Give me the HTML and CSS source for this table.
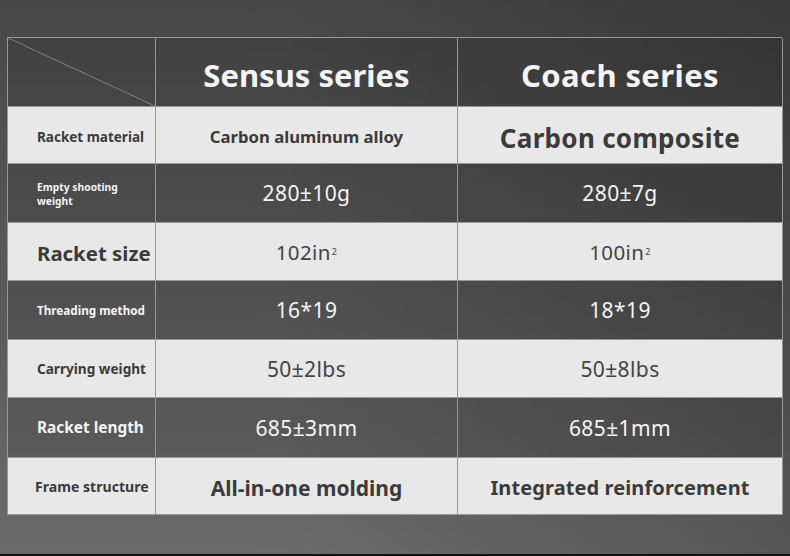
FILE: index.html
```html
<!DOCTYPE html>
<html>
<head>
<meta charset="utf-8">
<link rel="stylesheet" href="styles.css">
</head>
<body>
<div class="page">
  <div class="table">
    <div class="cell dark corner"></div>
    <div class="cell dark head">Sensus series</div>
    <div class="cell dark head h-coach">Coach series</div>

    <div class="cell light label l-material">Racket material</div>
    <div class="cell light val v-material">Carbon aluminum alloy</div>
    <div class="cell light val v-composite">Carbon composite</div>

    <div class="cell dark label l-empty">Empty shooting<br>weight</div>
    <div class="cell dark val num">280±10g</div>
    <div class="cell dark val num">280±7g</div>

    <div class="cell light label l-size">Racket size</div>
    <div class="cell light val num n-size">102in<sup class="sq">2</sup></div>
    <div class="cell light val num n-size">100in<sup class="sq">2</sup></div>

    <div class="cell dark label l-thread">Threading method</div>
    <div class="cell dark val num">16*19</div>
    <div class="cell dark val num">18*19</div>

    <div class="cell light label l-carry">Carrying weight</div>
    <div class="cell light val num">50±2lbs</div>
    <div class="cell light val num">50±8lbs</div>

    <div class="cell dark label l-length">Racket length</div>
    <div class="cell dark val num">685±3mm</div>
    <div class="cell dark val num">685±1mm</div>

    <div class="cell light label l-frame">Frame structure</div>
    <div class="cell light val v-frame">All-in-one molding</div>
    <div class="cell light val v-integrated">Integrated reinforcement</div>
  </div>
</div>
</body>
</html>
```
FILE: styles.css
```css
html, body {
  margin: 0;
  padding: 0;
}
body {
  width: 790px;
  height: 556px;
  overflow: hidden;
  font-family: "Noto Sans", "Open Sans", sans-serif;
}
.page {
  box-sizing: border-box;
  height: 556px;
  padding: 37px 0 0 7px;
  border-bottom: 2px solid #101010;
  background:
    linear-gradient(to left, rgba(0,0,0,0.2), rgba(0,0,0,0) 65%),
    linear-gradient(to bottom, #474747, #6b6b6b);
}
.table {
  display: grid;
  width: 775px;
  grid-template-columns: 148px 302px 325px;
  grid-template-rows: 69px 57px 59px 58px 59px 58px 60px 57px;
  border-left: 1px solid #979797;
  border-top: 1px solid #979797;
  box-sizing: border-box;
}
.cell {
  box-sizing: border-box;
  border-right: 1px solid #979797;
  border-bottom: 1px solid #979797;
  display: flex;
  align-items: center;
  justify-content: center;
  text-align: center;
}
.dark {
  background: rgba(0,0,0,0.1);
  color: #f4f4f4;
}
.light {
  background: #e8e8e8;
  color: #3b3b3b;
}
.corner {
  background:
    linear-gradient(to top right, transparent calc(50% - 0.7px), #8c8c8c 50%, transparent calc(50% + 0.7px)),
    rgba(0,0,0,0.1);
}
.head {
  font-size: 31px;
  font-weight: 700;
  padding-top: 6px;
}
.h-coach { letter-spacing: 0.4px; }
.label {
  justify-content: flex-start;
  text-align: left;
  padding-left: 29px;
  font-weight: 700;
}
.l-material { font-size: 13.5px; padding-top: 3px; }
.l-empty { font-size: 10.3px; line-height: 14px; padding-top: 2px; }
.l-size { font-size: 20.4px; padding-top: 3px; }
.l-thread { font-size: 11.7px; }
.l-carry { font-size: 13.6px; }
.l-length { font-size: 15.4px; }
.l-frame { font-size: 14.1px; padding-left: 27px; }
.val { font-weight: 700; }
.v-material { font-size: 16.7px; padding-top: 3px; }
.v-composite { font-size: 26px; letter-spacing: 0.3px; padding-top: 5px; }
.v-frame { font-size: 21px; padding-top: 3px; }
.v-integrated { font-size: 20px; letter-spacing: 0.1px; padding-top: 3px; }
.num {
  font-weight: 400;
  font-size: 21px;
  letter-spacing: 0.4px;
}
.light.num { color: #444; }
.n-size { font-size: 20.5px; }
.sq {
  font-size: 9px;
  vertical-align: 9px;
  line-height: 0;
  margin-left: 1px;
}
```
